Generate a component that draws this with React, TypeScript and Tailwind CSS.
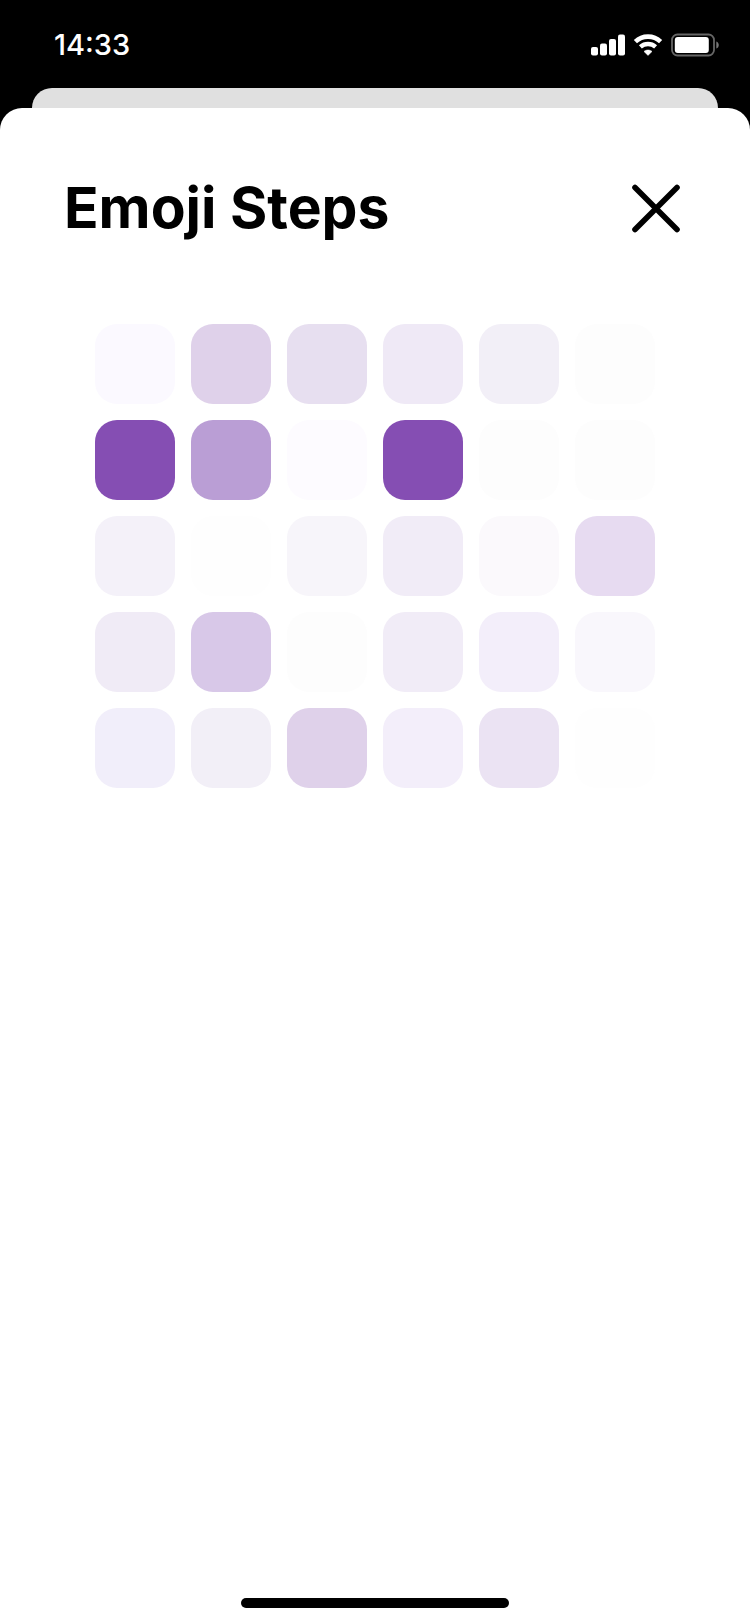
import React from "react";

const rows: string[][] = [
  ["bg-[#fbf9ff]", "bg-[#dfd1ea]", "bg-[#e7dff0]", "bg-[#efe9f6]", "bg-[#f2eff7]", "bg-[#fdfdfd]"],
  ["bg-[#854eb3]", "bg-[#ba9ed5]", "bg-[#fdfbff]", "bg-[#854eb3]", "bg-[#fdfdfd]", "bg-[#fdfdfd]"],
  ["bg-[#f4f1f9]", "bg-[#fefefe]", "bg-[#f7f5fa]", "bg-[#f1ecf7]", "bg-[#fbf9fc]", "bg-[#e7dbf1]"],
  ["bg-[#f0ebf6]", "bg-[#d8c8e8]", "bg-[#fdfdfd]", "bg-[#f1ecf7]", "bg-[#f3eefa]", "bg-[#f9f7fc]"],
  ["bg-[#f1eefa]", "bg-[#f2eff7]", "bg-[#dfd1ea]", "bg-[#f3eefa]", "bg-[#ebe3f3]", "bg-[#fefefe]"],
];

function SignalIcon() {
  return (
    <svg width="34" height="22" viewBox="0 0 34 22" fill="white" role="img" aria-label="Signal">
      <rect x="0" y="13" width="7" height="8.5" rx="2" />
      <rect x="9" y="9.5" width="7" height="12" rx="2" />
      <rect x="18" y="5" width="7" height="16.5" rx="2" />
      <rect x="27" y="0.5" width="7" height="21" rx="2" />
    </svg>
  );
}

function WifiIcon() {
  return (
    <svg width="30" height="22" viewBox="0 0 30 22" fill="none" role="img" aria-label="Wi-Fi">
      <path d="M2.4 7.6C9.4 1 20.6 1 27.6 7.6" stroke="white" strokeWidth="4.6" />
      <path d="M7.4 12.9C11.8 9 18.2 9 22.6 12.9" stroke="white" strokeWidth="4.4" />
      <path d="M15 21.4L11 17.5C13.1 15.5 16.9 15.5 19 17.5Z" fill="white" stroke="white" strokeWidth="0.5" strokeLinejoin="round" />
    </svg>
  );
}

function BatteryIcon() {
  return (
    <svg width="49" height="24" viewBox="0 0 49 24" fill="none" role="img" aria-label="Battery">
      <rect x="1" y="1.5" width="42" height="21" rx="5.5" stroke="#666" strokeWidth="1.8" />
      <rect x="3.8" y="4" width="34" height="16" rx="3" fill="white" />
      <path d="M45.3 8.5C48.6 9.5 48.6 14.5 45.3 15.5Z" fill="#777" />
    </svg>
  );
}

export default function App() {
  return (
    <div className="flex min-h-screen flex-col bg-black font-['Inter',sans-serif] text-black">
      <header className="flex h-22 items-center justify-between pt-0.5 pr-[30px] pl-[54px] text-white">
        <time className="text-[29px] leading-8 font-medium">14:33</time>
        <div className="flex items-center gap-2">
          <SignalIcon />
          <WifiIcon />
          <BatteryIcon />
        </div>
      </header>
      <div className="mx-8 h-5 rounded-t-[20px] bg-[#e0e0e0]" />
      <main className="flex flex-1 flex-col rounded-t-[22px] bg-white px-16 pt-16 pb-4">
        <div className="flex items-center justify-between">
          <h1 className="text-[57px] leading-[72px] font-bold">Emoji Steps</h1>
          <button type="button" aria-label="Close" className="p-1">
            <svg width="54" height="54" viewBox="0 0 54 54" fill="none" stroke="black" strokeWidth="5.6" strokeLinecap="round">
              <path d="M7 6.5L49 48.5M49 6.5L7 48.5" />
            </svg>
          </button>
        </div>
        <div className="mt-20 flex flex-col items-center gap-4">
          {rows.map((row, r) => (
            <div key={r} className="flex gap-4">
              {row.map((tone, c) => (
                <div key={c} className={"size-20 rounded-[22px] " + tone} />
              ))}
            </div>
          ))}
        </div>
        <div className="mx-auto mt-auto h-[10px] w-67 rounded-full bg-black" />
      </main>
    </div>
  );
}
